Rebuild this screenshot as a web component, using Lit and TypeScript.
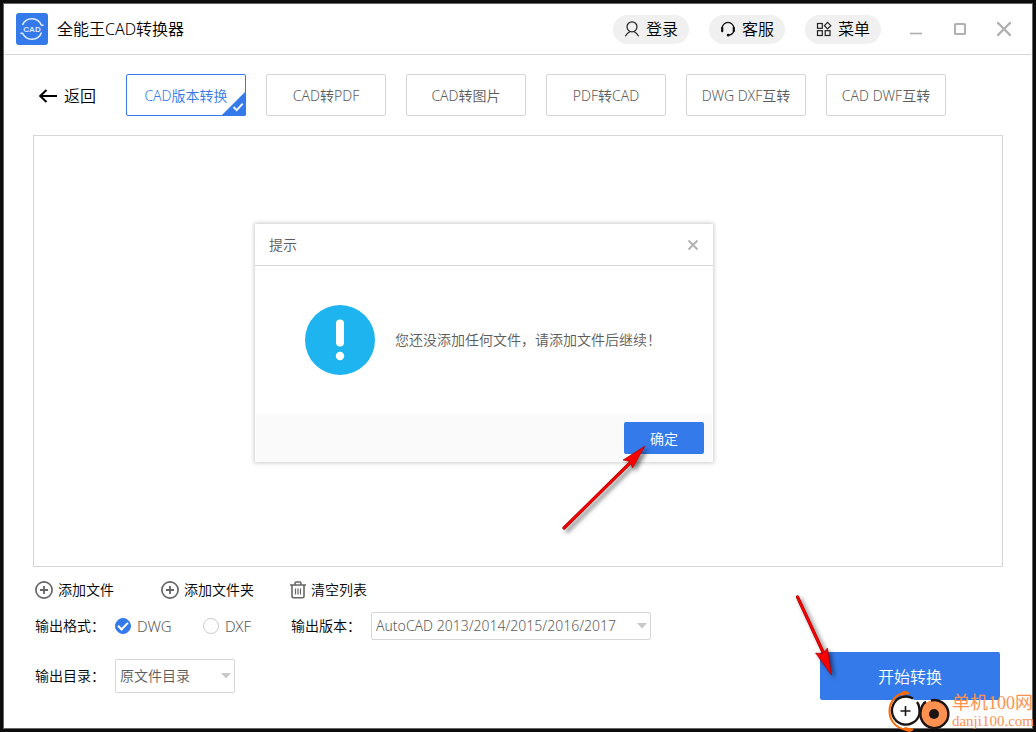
import { LitElement, html, css, svg } from "lit";
import { customElement, state } from "lit/decorators.js";

const plusCircle = html`<svg class="icon" width="18" height="18" viewBox="0 0 18 18" aria-hidden="true">
  <circle cx="9" cy="9" r="8.1" fill="none" stroke="#666" stroke-width="1.7" />
  <path d="M9 5v8M5 9h8" stroke="#666" stroke-width="1.8" />
</svg>`;

const trash = html`<svg class="icon" width="16" height="18" viewBox="0 0 16 18" aria-hidden="true">
  <path d="M0 4h16M5 4V2.4Q5 1 6.4 1h3.2Q11 1 11 2.4V4M2 4v11.2q0 1.6 1.6 1.6h8.8q1.6 0 1.6-1.6V4" fill="none" stroke="#666" stroke-width="1.6" />
  <path d="M5.5 7.5v6M8 7.5v6M10.5 7.5v6" stroke="#666" stroke-width="1.2" />
</svg>`;

const userIcon = html`<svg class="icon" width="16" height="16" viewBox="0 0 16 16" aria-hidden="true">
  <circle cx="8" cy="5.8" r="5" fill="none" stroke="#222" stroke-width="1.2" />
  <path d="M1.3 15.3C2.6 13 4.2 11.6 6 10.6M14.7 15.3C13.4 13 11.8 11.6 10 10.6" fill="none" stroke="#222" stroke-width="1.2" />
</svg>`;

const headsetIcon = html`<svg class="icon" width="16" height="16" viewBox="0 0 16 16" aria-hidden="true">
  <path d="M2.2 8V7.2A5.8 5.8 0 0 1 13.8 7.2V8.5Q13.8 13.6 8.5 14.2" fill="none" stroke="#111" stroke-width="1.3" />
  <path d="M2.2 6.8v3.4M13.8 6.8v3.4" stroke="#111" stroke-width="2.2" stroke-linecap="round" />
  <circle cx="8.2" cy="14.2" r="1.4" fill="#111" />
</svg>`;

const gridIcon = html`<svg class="icon" width="16" height="16" viewBox="0 0 16 16" aria-hidden="true">
  <g fill="none" stroke="#222" stroke-width="1.2">
    <rect x="1.5" y="2.5" width="4.8" height="4.8" />
    <rect x="1.5" y="9.7" width="4.8" height="4.8" />
    <rect x="9.2" y="9.7" width="4.8" height="4.8" />
    <path d="M11.6 1.4l3.2 3.3-3.2 3.3-3.2-3.3z" />
  </g>
</svg>`;

const caret = html`<svg class="caret" width="10" height="6" viewBox="0 0 10 6" aria-hidden="true">
  <path d="M0 0h10L5 5.5z" fill="#c8c8c8" />
</svg>`;

const shadowArrow = (shaft: string, head: string) => svg`
  <path d="${shaft}" stroke="#900" stroke-width="3.2" stroke-linecap="round" />
  <path d="${head}" fill="#f80000" stroke="#a00000" stroke-width="0.6" />
  <path d="${shaft}" stroke="#f80000" stroke-width="2.4" stroke-linecap="round" />`;

@customElement("app-root")
export class AppRoot extends LitElement {
  @state() private active = 0;
  @state() private format = "DWG";

  private tabs = ["CAD版本转换", "CAD转PDF", "CAD转图片", "PDF转CAD", "DWG DXF互转", "CAD DWF互转"];

  static styles = css`
    :host {
      display: block;
      font: 350 14px/20px "Noto Sans", "Noto Sans CJK SC", sans-serif;
      color: #000;
    }
    * { box-sizing: border-box; }
    button, select, input { font: inherit; color: inherit; margin: 0; }
    button { background: none; border: 0; padding: 0; cursor: pointer; white-space: nowrap; }
    .icon { flex: none; display: block; }
    .window {
      position: relative;
      display: flex;
      flex-direction: column;
      min-height: 100vh;
      background: #fff;
      border: 3px solid #0c0c0c;
      box-shadow: inset 0 0 0 1px #666;
      padding: 1px;
    }
    .titlebar {
      display: flex;
      align-items: center;
      height: 51px;
      margin: 0 1px;
      padding: 0 5px 0 11px;
      border-bottom: 1px solid #d6d6d6;
    }
    .logo { display: block; margin-right: 9px; }
    .title { margin: 0 auto 0 0; font-size: 16px; font-weight: inherit; }
    .pills { display: flex; gap: 20px; margin-right: 13px; }
    .pill {
      display: flex;
      align-items: center;
      justify-content: center;
      gap: 6px;
      width: 76px;
      height: 29px;
      border-radius: 15px;
      background: #f0f0f0;
      font-size: 16px;
    }
    .control { display: grid; place-items: center; width: 44px; height: 30px; }
    .tabs { display: flex; align-items: center; gap: 20px; padding: 19px 29px 19px 34px; }
    .back { display: flex; align-items: center; gap: 6px; width: 68px; font-size: 16px; }
    .tab, .ok, .start, .back, .action { padding-top: 1px; }
    .tab {
      position: relative;
      width: 120px;
      height: 42px;
      border: 1px solid #d6d6d6;
      border-radius: 2px;
      color: #5c5c5c;
    }
    .tab.active { border-color: #357aeb; color: #357aeb; }
    .mark { position: absolute; right: -1px; bottom: -1px; }
    .files {
      position: relative;
      flex: 1;
      min-height: 340px;
      margin: 0 29px;
      border: 1px solid #d6d6d6;
    }
    .dialog {
      position: absolute;
      left: 221px;
      top: 88px;
      width: 458px;
      background: #fff;
      color: #5c5c5c;
      box-shadow: 0 0 4px 1px #ccc;
    }
    .dialog-head {
      display: flex;
      align-items: center;
      justify-content: space-between;
      height: 42px;
      padding: 0 14px;
      border-bottom: 1px solid #d6d6d6;
    }
    .dialog-title { margin: 0; font-size: 14px; font-weight: inherit; }
    .dialog-body { display: flex; align-items: center; gap: 20px; height: 148px; padding: 0 50px; }
    .message { margin: 0; white-space: nowrap; }
    .dialog-foot {
      display: flex;
      justify-content: flex-end;
      padding: 8px;
      margin: 0 1px;
      background: #fafafa;
    }
    .ok { width: 80px; height: 32px; border-radius: 2px; background: #357aeb; color: #fff; }
    .pointer {
      position: absolute;
      pointer-events: none;
      overflow: visible;
      filter: drop-shadow(3px 3px 2px rgba(0, 0, 0, 0.5));
    }
    .pointer-ok { left: 300px; top: 215px; }
    .pointer-start { left: -30px; top: -62px; }
    .footer {
      display: flex;
      justify-content: space-between;
      align-items: flex-end;
      padding: 10px 32px 28px 31px;
    }
    .settings { padding-bottom: 7px; }
    .actions { display: flex; height: 24px; margin-bottom: 11px; }
    .action { display: flex; align-items: center; gap: 5px; margin-right: 47px; }
    .action + .action { margin-right: 36px; }
    .row { display: flex; align-items: center; }
    .row + .row { margin-top: 19px; }
    .label { width: 80px; }
    .choice { display: flex; align-items: center; gap: 6px; width: 88px; color: #5c5c5c; font-size: 15px; }
    .radio {
      appearance: none;
      display: grid;
      place-items: center;
      width: 16px;
      height: 16px;
      border: 1px solid #ccc;
      border-radius: 50%;
      background: #fff;
    }
    .radio:checked { background: #357aeb; border-color: #357aeb; }
    .radio:checked::after {
      content: "";
      width: 8px;
      height: 4px;
      border: solid #fff;
      border-width: 0 0 2px 2px;
      transform: translateY(-1px) rotate(-45deg);
    }
    .select-wrap { display: grid; align-items: center; color: #5c5c5c; }
    .select-wrap > * { grid-area: 1 / 1; }
    .select {
      appearance: none;
      width: 100%;
      height: 100%;
      padding: 0 16px 0 4px;
      border: 1px solid #d6d6d6;
      border-radius: 2px;
      background: #fff;
    }
    .caret { justify-self: end; margin-right: 4px; pointer-events: none; }
    .version { width: 280px; height: 28px; }
    .folder { width: 120px; height: 34px; }
    .start-wrap { position: relative; }
    .start { width: 180px; height: 48px; border-radius: 2px; background: #357aeb; color: #fff; font-size: 16px; }
    .brand {
      position: absolute;
      right: -1px;
      bottom: -3px;
      display: flex;
      align-items: center;
      gap: 1px;
      color: #ff9150;
      font-family: "Liberation Serif", "Noto Sans CJK SC", serif;
      font-weight: 400;
      pointer-events: none;
    }
    .brand-name { display: block; font-size: 18px; line-height: 20px; }
    .brand-site { display: block; font-size: 15px; line-height: 16px; }
  `;

  render() {
    return html`
      <main class="window">
        <header class="titlebar">
          <svg class="logo" width="32" height="32" viewBox="0 0 32 32" aria-hidden="true">
            <rect width="32" height="32" rx="3" fill="#357aeb" />
            <path d="M6.500 12A10.200 10.200 0 0 1 25.500 12.500M25.500 19.500A10.200 10.200 0 0 1 6.500 20M25.500 12.500l2-.5M6.500 20l-2 .5" fill="none" stroke="#e4eeff" stroke-width="1.5" />
            <text x="16" y="19" text-anchor="middle" font-family="Liberation Sans" font-weight="700" font-size="8" fill="#dce8ff">CAD</text>
          </svg>
          <h1 class="title">全能王CAD转换器</h1>
          <div class="pills">
            <button class="pill">${userIcon}登录</button>
            <button class="pill">${headsetIcon}客服</button>
            <button class="pill">${gridIcon}菜单</button>
          </div>
          <button class="control" aria-label="最小化">
            <svg width="14" height="14" viewBox="0 0 14 14"><path d="M1 11.500h12" stroke="#b0b0b0" stroke-width="1.6" /></svg>
          </button>
          <button class="control" aria-label="最大化">
            <svg width="14" height="14" viewBox="0 0 14 14"><rect x="2" y="2" width="10" height="10" rx="0.5" fill="none" stroke="#b0b0b0" stroke-width="2" /></svg>
          </button>
          <button class="control" aria-label="关闭">
            <svg width="14" height="14" viewBox="0 0 14 14"><path d="M1 1l12 12M13 1L1 13" stroke="#b0b0b0" stroke-width="2.4" stroke-linecap="round" /></svg>
          </button>
        </header>

        <nav class="tabs">
          <button class="back">
            <svg class="icon" width="20" height="16" viewBox="0 0 20 16" aria-hidden="true">
              <path d="M19 8H2.500M8.500 2l-6.300 6 6.300 6" fill="none" stroke="#000" stroke-width="2" />
            </svg>返回
          </button>
          ${this.tabs.map(
            (name, i) => html`<button class="tab ${i === this.active ? "active" : ""}" @click=${() => (this.active = i)}>
              ${name}
              ${i === this.active
                ? html`<svg class="mark" width="25" height="25" viewBox="0 0 25 25" aria-hidden="true">
                    <path d="M25 0v23q0 2-2 2H0z" fill="#357aeb" />
                    <path d="M12.500 16l3.200 3.200 6-6.500" fill="none" stroke="#fff" stroke-width="1.8" />
                  </svg>`
                : ""}
            </button>`
          )}
        </nav>

        <section class="files">
          <div class="dialog" role="dialog" aria-labelledby="dialog-title">
            <div class="dialog-head">
              <h2 class="dialog-title" id="dialog-title">提示</h2>
              <button aria-label="关闭">
                <svg class="icon" width="12" height="12" viewBox="0 0 12 12"><path d="M1.500 1.500l9 9M10.500 1.500l-9 9" stroke="#b0b0b0" stroke-width="1.8" /></svg>
              </button>
            </div>
            <div class="dialog-body">
              <svg class="icon" width="70" height="70" viewBox="0 0 70 70" aria-hidden="true">
                <circle cx="35" cy="35" r="35" fill="#1eb4f0" />
                <path d="M35 18.500v19" stroke="#fff" stroke-width="8" stroke-linecap="round" />
                <circle cx="35" cy="51" r="4.200" fill="#fff" />
              </svg>
              <p class="message">您还没添加任何文件，请添加文件后继续！</p>
            </div>
            <div class="dialog-foot"><button class="ok">确定</button></div>
            <svg class="pointer pointer-ok" width="100" height="100" viewBox="555 439 100 100" fill="none" aria-hidden="true">
              ${shadowArrow("M564 528L631 462", "M645 446L623 460L630 461.500L632.500 468Z")}
            </svg>
          </div>
        </section>

        <footer class="footer">
          <div class="settings">
            <div class="actions">
              <button class="action">${plusCircle}添加文件</button>
              <button class="action">${plusCircle}添加文件夹</button>
              <button class="action">${trash}清空列表</button>
            </div>
            <div class="row">
              <span class="label">输出格式：</span>
              ${["DWG", "DXF"].map(
                (f) => html`<label class="choice">
                  <input class="radio" type="radio" name="format" .checked=${f === this.format} @change=${() => (this.format = f)} />${f}
                </label>`
              )}
              <label class="label" for="version">输出版本：</label>
              <span class="select-wrap version">
                <select class="select" id="version"><option>AutoCAD 2013/2014/2015/2016/2017</option></select>${caret}
              </span>
            </div>
            <div class="row">
              <label class="label" for="folder">输出目录：</label>
              <span class="select-wrap folder">
                <select class="select" id="folder"><option>原文件目录</option></select>${caret}
              </span>
            </div>
          </div>
          <div class="start-wrap">
            <button class="start">开始转换</button>
            <svg class="pointer pointer-start" width="50" height="90" viewBox="790 590 50 90" fill="none" aria-hidden="true">
              ${shadowArrow("M797.500 597L823 652", "M831.500 675L815.500 653L822.500 653.500L827.500 648Z")}
            </svg>
          </div>
        </footer>

        <div class="brand">
          <svg class="icon" width="63" height="42" viewBox="888 690 63 42" aria-hidden="true">
            <path d="M909 693.500C898 691 889 701 889.500 712C890 722 897 729 908 730" fill="none" stroke="#ff6a00" stroke-width="2" />
            <path d="M900 694Q905 688 909 693.500L901 696zM903 729Q910 735 914 729L905 727z" fill="#ff6a00" />
            <circle cx="905.500" cy="711" r="14" fill="#fff" />
            <path d="M913 698.500A14 14 0 1 0 919.500 714Q920 706 917 702" fill="none" stroke="#1d1414" stroke-width="2.4" />
            <path d="M905.500 706v10M900.500 711h10" stroke="#1d1414" stroke-width="1.6" />
            <circle cx="934.500" cy="714" r="14" fill="#ff9150" />
            <path d="M931 700.500A14 14 0 1 1 921 710M919.500 715Q922 703 926 702" fill="none" stroke="#1d1414" stroke-width="2.4" />
            <circle cx="934" cy="714" r="5" fill="#1d1414" />
          </svg>
          <div>
            <span class="brand-name">单机100网</span>
            <span class="brand-site">danji100.com</span>
          </div>
        </div>
      </main>
    `;
  }
}
